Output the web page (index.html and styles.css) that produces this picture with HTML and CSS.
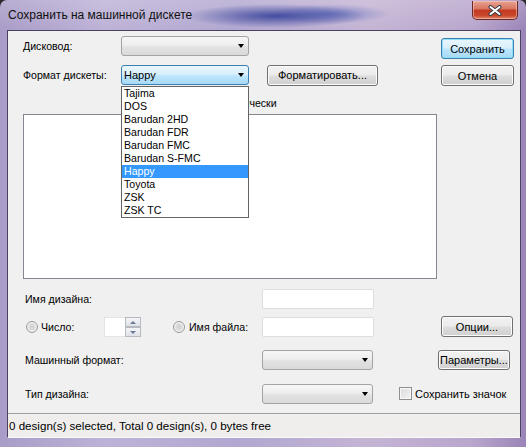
FILE: index.html
```html
<!DOCTYPE html>
<html lang="ru">
<head>
    <meta charset="UTF-8">
    <title>Сохранить на машинной дискете</title>
    <link rel="stylesheet" href="styles.css">
</head>
<body>
    <div class="window">
        <div class="titlebar">
            <span class="title">Сохранить на машинной дискете</span>
            <button class="close-btn" title="Закрыть">
                <svg width="14" height="11" viewBox="0 0 14 11">
                    <path d="M2.5 2 L11.5 9 M11.5 2 L2.5 9" stroke="#3a3f4a" stroke-width="4" stroke-linecap="round"/>
                    <path d="M2.5 2 L11.5 9 M11.5 2 L2.5 9" stroke="#ffffff" stroke-width="2" stroke-linecap="round"/>
                </svg>
            </button>
        </div>

        <div class="client">
            <div class="dialog">
                <div class="top">
                    <div class="top-left">
                        <div class="row">
                            <label class="lbl-top">Дисковод:</label>
                            <div class="combo"></div>
                        </div>
                        <div class="row row-format">
                            <label class="lbl-top">Формат дискеты:</label>
                            <div class="combo combo-focus">
                                <span class="combo-text">Happy</span>
                                <ul class="droplist">
                                    <li>Tajima</li>
                                    <li>DOS</li>
                                    <li>Barudan 2HD</li>
                                    <li>Barudan FDR</li>
                                    <li>Barudan FMC</li>
                                    <li>Barudan S-FMC</li>
                                    <li class="selected">Happy</li>
                                    <li>Toyota</li>
                                    <li>ZSK</li>
                                    <li>ZSK TC</li>
                                </ul>
                            </div>
                            <button class="btn btn-format">Форматировать...</button>
                        </div>
                        <div class="row-view">Показывать графически</div>
                        <div class="preview"></div>
                    </div>
                    <div class="top-right">
                        <button class="btn btn-default">Сохранить</button>
                        <button class="btn">Отмена</button>
                    </div>
                </div>

                <div class="row row-low row-name">
                    <label class="lbl-low">Имя дизайна:</label>
                    <div class="edit"></div>
                </div>

                <div class="row row-low row-num">
                    <span class="radio"></span>
                    <label class="radio-lbl lbl-num">Число:</label>
                    <div class="spin">
                        <div class="spin-edit"></div>
                        <div class="spin-btns">
                            <span class="spin-up"></span>
                            <span class="spin-down"></span>
                        </div>
                    </div>
                    <span class="radio radio-file"></span>
                    <label class="radio-lbl lbl-file">Имя файла:</label>
                    <div class="edit"></div>
                    <button class="btn btn-opts">Опции...</button>
                </div>

                <div class="row row-low row-machine">
                    <label class="lbl-low">Машинный формат:</label>
                    <div class="combo combo-low"></div>
                    <button class="btn btn-params">Параметры...</button>
                </div>

                <div class="row row-low row-type">
                    <label class="lbl-low">Тип дизайна:</label>
                    <div class="combo combo-low"></div>
                    <span class="checkbox"></span>
                    <label class="check-lbl">Сохранить значок</label>
                </div>
            </div>

            <div class="status">0 design(s) selected, Total 0 design(s), 0 bytes free</div>
        </div>
    </div>
</body>
</html>
```

FILE: styles.css
```css
body {
    margin: 0;
    background: #2c2c30;
    font-family: "Liberation Sans", Arial, sans-serif;
    font-size: 10.6px;
    color: #000;
}

/* window frame */
.window {
    width: 526px;
    height: 447px;
    box-sizing: border-box;
    padding: 0 5px 9px 7px;
    display: flex;
    flex-direction: column;
    border-radius: 7px 7px 0 0;
    background:
        radial-gradient(ellipse 90px 12px at 275px 16px, rgba(45, 58, 150, 0.85), rgba(45, 58, 150, 0) 100%),
        radial-gradient(ellipse 60px 10px at 330px 14px, rgba(70, 90, 180, 0.6), rgba(70, 90, 180, 0) 100%),
        linear-gradient(to bottom, rgba(255, 255, 255, 0.18), rgba(255, 255, 255, 0) 30px),
        linear-gradient(to right, #a99cc8 0%, #bdb2d6 20%, #b2a7d0 45%, #c4b4d4 70%, #b9a6cc 90%, #9a84b8 100%);
}

.titlebar {
    height: 30px;
    display: flex;
    align-items: flex-start;
    position: relative;
}

.title {
    font-size: 12px;
    margin-left: 1px;
    margin-top: 8px;
    color: #111;
}

.close-btn {
    margin-left: auto;
    margin-top: 1px;
    margin-right: 3px;
    width: 46px;
    height: 19px;
    padding: 0;
    display: flex;
    align-items: center;
    justify-content: center;
    border: 1px solid #6b2a2a;
    border-top: none;
    border-radius: 0 0 5px 5px;
    background: linear-gradient(#e8a493 0%, #d7735f 45%, #c23a20 50%, #c8462c 80%, #de8a6c 100%);
    box-shadow: inset 0 0 0 1px rgba(255, 210, 200, 0.5);
}

/* client area */
.client {
    height: 408px;
    box-sizing: border-box;
    border: 1px solid #4b4260;
    border-bottom-color: #fafafa;
    background: #f0f0f0;
    display: flex;
    flex-direction: column;
}

.dialog {
    flex: 1;
}

.top {
    display: flex;
}

.top-left {
    padding: 5px 0 0 15px;
    width: 414px;
}

.top-right {
    margin-left: 4px;
    padding-top: 7px;
    display: flex;
    flex-direction: column;
    gap: 6px;
}

.top-right .btn {
    width: 73px;
}

.row {
    display: flex;
    align-items: center;
    height: 20px;
}

.row-format {
    margin-top: 9px;
}

.lbl-top {
    width: 98px;
}

.row-view {
    margin-top: 11px;
    height: 14px;
    line-height: 14px;
    padding-left: 135px;
}

.preview {
    margin-top: 4px;
    height: 163px;
    border: 1px solid #828790;
    background: #fff;
}

/* combo boxes */
.combo {
    position: relative;
    width: 128px;
    height: 20px;
    box-sizing: border-box;
    border: 1px solid #a3a3a3;
    border-radius: 3px;
    background: linear-gradient(#f6f6f6 0%, #eeeeee 45%, #e2e2e2 55%, #dadada 100%);
}

.combo::after {
    content: "";
    position: absolute;
    right: 4px;
    top: 7px;
    border-left: 3.5px solid transparent;
    border-right: 3.5px solid transparent;
    border-top: 4px solid #000;
}

.combo-focus {
    border-color: #3c7fb1;
    background: linear-gradient(#eaf6fd 0%, #d9f0fc 45%, #bee6fd 55%, #a7d9f5 100%);
}

.combo-text {
    display: block;
    padding-left: 2px;
    line-height: 18px;
    font-size: 11px;
}

.combo-low {
    width: 111px;
}

/* open list of the disk format combo */
.droplist {
    position: absolute;
    top: 20px;
    left: -1px;
    width: 128px;
    margin: 0;
    padding: 0;
    list-style: none;
    box-sizing: border-box;
    border: 1px solid #646464;
    background: #fff;
    z-index: 2;
    font-size: 10.6px;
}

.droplist li {
    height: 13px;
    line-height: 13px;
    padding-left: 2px;
}

.droplist li.selected {
    background: #3399ff;
    color: #fff;
}

/* buttons */
.btn {
    height: 21px;
    padding: 0;
    font-family: inherit;
    font-size: 11px;
    color: #000;
    border: 1px solid #707070;
    border-radius: 3px;
    background: linear-gradient(#f2f2f2 0%, #ebebeb 48%, #dddddd 52%, #cfcfcf 100%);
    box-shadow: inset 0 0 0 1px #fcfcfc;
}

.btn-default {
    border-color: #3c7fb1;
    background: linear-gradient(#eaf6fd 0%, #d9f0fc 48%, #bee6fd 52%, #a7d9f5 100%);
    box-shadow: inset 0 0 0 1px #8ee0f8;
}

.btn-format {
    margin-left: 18px;
    width: 111px;
}

/* lower rows */
.row-low {
    height: 21px;
    padding-left: 17px;
}

.row-name {
    margin-top: 9px;
}

.row-num {
    margin-top: 7px;
    padding-left: 18px;
}

.row-machine {
    margin-top: 12px;
}

.row-type {
    margin-top: 13px;
}

.lbl-low {
    width: 237px;
}

.edit {
    width: 112px;
    height: 20px;
    box-sizing: border-box;
    border: 1px solid #dcdde2;
    border-radius: 2px;
    background: #fff;
}

.radio {
    width: 12px;
    height: 12px;
    box-sizing: border-box;
    border-radius: 50%;
    border: 1px solid #9a9a9a;
    background: radial-gradient(circle at 50% 50%, #d0d0d0 0, #dcdcdc 3px, #f4f4f4 5px);
}

.radio-lbl {
    margin-left: 3px;
}

.lbl-num {
    width: 63px;
}

.radio-file {
    margin-left: 32px;
}

.lbl-file {
    margin-left: 4px;
    width: 73px;
}

.spin {
    display: flex;
    width: 37px;
    height: 20px;
}

.spin-edit {
    width: 21px;
    background: #fff;
    border: 1px solid #e4e4e4;
    border-right: none;
}

.spin-btns {
    width: 16px;
    display: flex;
    flex-direction: column;
}

.spin-btns span {
    flex: 1;
    position: relative;
    box-sizing: border-box;
    border: 1px solid #b7bac0;
    background: linear-gradient(#f4f5f7, #dfe2e7);
}

.spin-up {
    border-bottom: none;
}

.spin-up::after,
.spin-down::after {
    content: "";
    position: absolute;
    left: 4px;
    border-left: 3px solid transparent;
    border-right: 3px solid transparent;
}

.spin-up::after {
    top: 3px;
    border-bottom: 3px solid #6b7a96;
}

.spin-down::after {
    top: 3px;
    border-top: 3px solid #6b7a96;
}

.btn-opts {
    margin-left: 67px;
    width: 72px;
}

.btn-params {
    margin-left: 65px;
    width: 72px;
    height: 20px;
}

.checkbox {
    margin-left: 26px;
    width: 13px;
    height: 13px;
    box-sizing: border-box;
    border: 1px solid #8f8f8f;
    background: linear-gradient(135deg, #dcdcdc, #f2f2f2);
    box-shadow: inset 0 0 0 1px #f7f7f7;
}

.check-lbl {
    margin-left: 3px;
    font-size: 11px;
}

/* status bar */
.status {
    height: 24px;
    box-sizing: border-box;
    border-top: 1px solid #a0a0a0;
    background: #efeeec;
    padding-left: 1px;
    line-height: 23px;
    font-size: 11.6px;
}
```
